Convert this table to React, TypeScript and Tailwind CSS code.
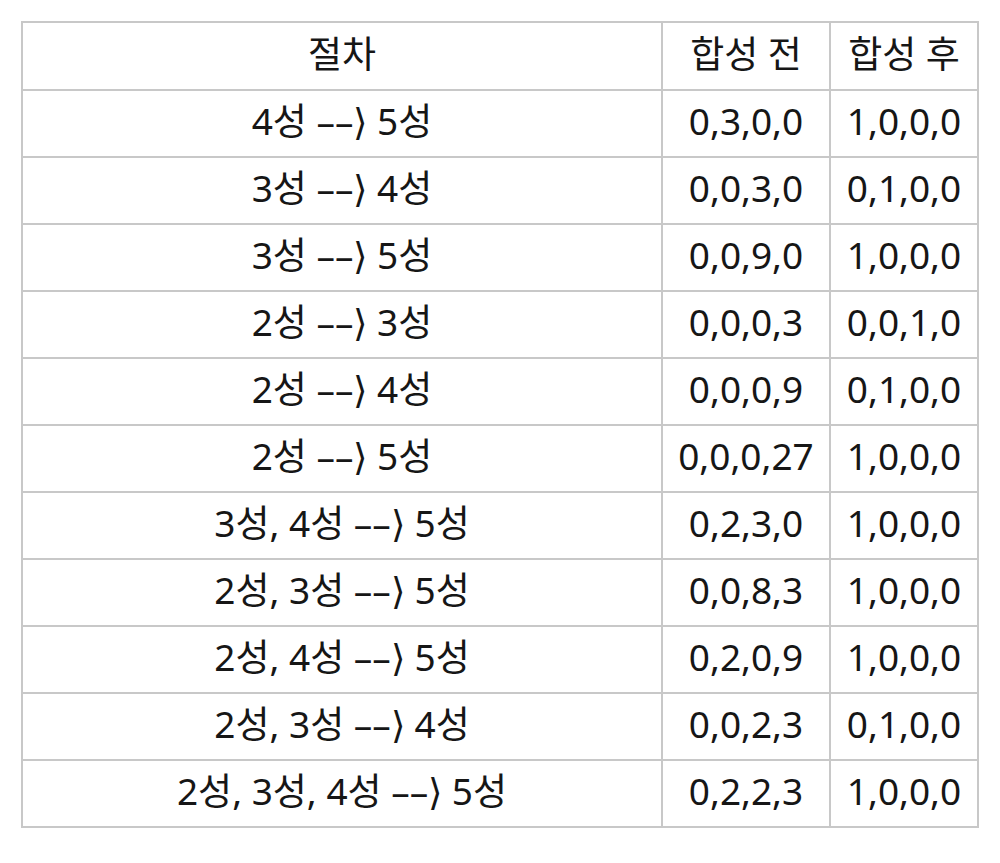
import React from "react";

const rows: [string, string, string][] = [
  ["4성 ––⟩ 5성", "0,3,0,0", "1,0,0,0"],
  ["3성 ––⟩ 4성", "0,0,3,0", "0,1,0,0"],
  ["3성 ––⟩ 5성", "0,0,9,0", "1,0,0,0"],
  ["2성 ––⟩ 3성", "0,0,0,3", "0,0,1,0"],
  ["2성 ––⟩ 4성", "0,0,0,9", "0,1,0,0"],
  ["2성 ––⟩ 5성", "0,0,0,27", "1,0,0,0"],
  ["3성, 4성 ––⟩ 5성", "0,2,3,0", "1,0,0,0"],
  ["2성, 3성 ––⟩ 5성", "0,0,8,3", "1,0,0,0"],
  ["2성, 4성 ––⟩ 5성", "0,2,0,9", "1,0,0,0"],
  ["2성, 3성 ––⟩ 4성", "0,0,2,3", "0,1,0,0"],
  ["2성, 3성, 4성 ––⟩ 5성", "0,2,2,3", "1,0,0,0"],
];

export default function App() {
  const cell = "border-2 border-[#c8c8c8] text-center px-0 pt-0 pb-[6px] font-normal whitespace-nowrap";
  return (
    <div className="w-[1000px] h-[863px] bg-white pl-[21px] pt-[21px] text-[#161616] font-['Noto_Sans','Noto_Sans_CJK_KR',sans-serif]">
      <table className="border-collapse w-[956px] table-fixed text-[37px] leading-none">
        <colgroup>
          <col className="w-[640px]" />
          <col className="w-[168px]" />
          <col className="w-[148px]" />
        </colgroup>
        <thead>
          <tr className="h-[68px]">
            <th className={cell}>절차</th>
            <th className={cell}>합성 전</th>
            <th className={cell}>합성 후</th>
          </tr>
        </thead>
        <tbody>
          {rows.map((r, i) => (
            <tr key={i} className="h-[67px]">
              <td className={cell}>{r[0]}</td>
              <td className={cell}>{r[1]}</td>
              <td className={cell}>{r[2]}</td>
            </tr>
          ))}
        </tbody>
      </table>
    </div>
  );
}
